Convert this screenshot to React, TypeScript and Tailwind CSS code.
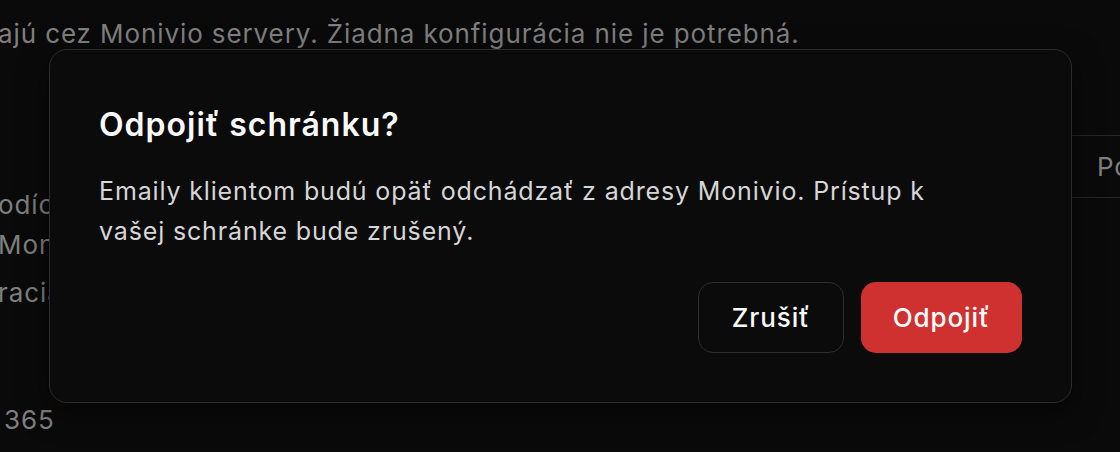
import React from 'react'

function BackgroundPage() {
  return (
    <div className="flex h-full w-full text-[26px] tracking-[0.9px] text-[#7f7f7f]">
      <div className="flex w-[520px] shrink-0 flex-col">
        <p className="-ml-[2px] mt-[16px] whitespace-nowrap leading-[36px]">
          ajú cez Monivio servery. Žiadna konfigurácia nie je potrebná.
        </p>
        <div className="-ml-[2px] mt-[133px] flex flex-col leading-[40px]">
          <span className="whitespace-nowrap">odíchodzia pošta</span>
          <span className="whitespace-nowrap">Monivio servery</span>
          <span className="mt-[8px] whitespace-nowrap">racia</span>
        </div>
        <span className="ml-[4px] mt-[89px] leading-[36px]">365</span>
      </div>
      <div className="ml-auto mt-[135px] -mr-[200px] w-[700px] shrink-0 self-start border-t border-[#262626]">
        <div className="flex h-[62px] items-center whitespace-nowrap border-b border-[#262626] pl-[477px]">
          Poskytovateľ
        </div>
      </div>
    </div>
  )
}

function DisconnectDialog() {
  return (
    <div className="absolute left-[49px] top-[49px] w-[1023px] rounded-[18px] border border-[#2c2c2c] bg-[#0b0b0b] px-[49px] pb-[49px] pt-[55px] shadow-[0_10px_30px_rgba(0,0,0,0.5)]">
      <h2 className="text-[32px] font-semibold leading-[40px] tracking-[1px] text-[#fafafa]">
        Odpojiť schránku?
      </h2>
      <p className="mt-[26px] max-w-[880px] text-[25px] leading-[40px] tracking-[0.85px] text-[#d6d6d6]">
        Emaily klientom budú opäť odchádzať z adresy Monivio. Prístup k vašej schránke bude zrušený.
      </p>
      <div className="mt-[31px] flex justify-end gap-[17px]">
        <button className="h-[71px] w-[146px] rounded-[15px] border border-[#2e2e2e] bg-[#0b0b0b] text-[26px] font-medium tracking-[0.9px] text-[#fafafa]">
          Zrušiť
        </button>
        <button className="h-[71px] w-[161px] rounded-[15px] bg-[#cf3131] text-[26px] font-medium tracking-[0.9px] text-white">
          Odpojiť
        </button>
      </div>
    </div>
  )
}

export default function App() {
  return (
    <div
      className="relative h-[452px] w-[1120px] overflow-hidden bg-[#0a0a0a]"
      style={{ fontFamily: 'Inter, "Noto Sans", sans-serif' }}
    >
      <BackgroundPage />
      <DisconnectDialog />
    </div>
  )
}
